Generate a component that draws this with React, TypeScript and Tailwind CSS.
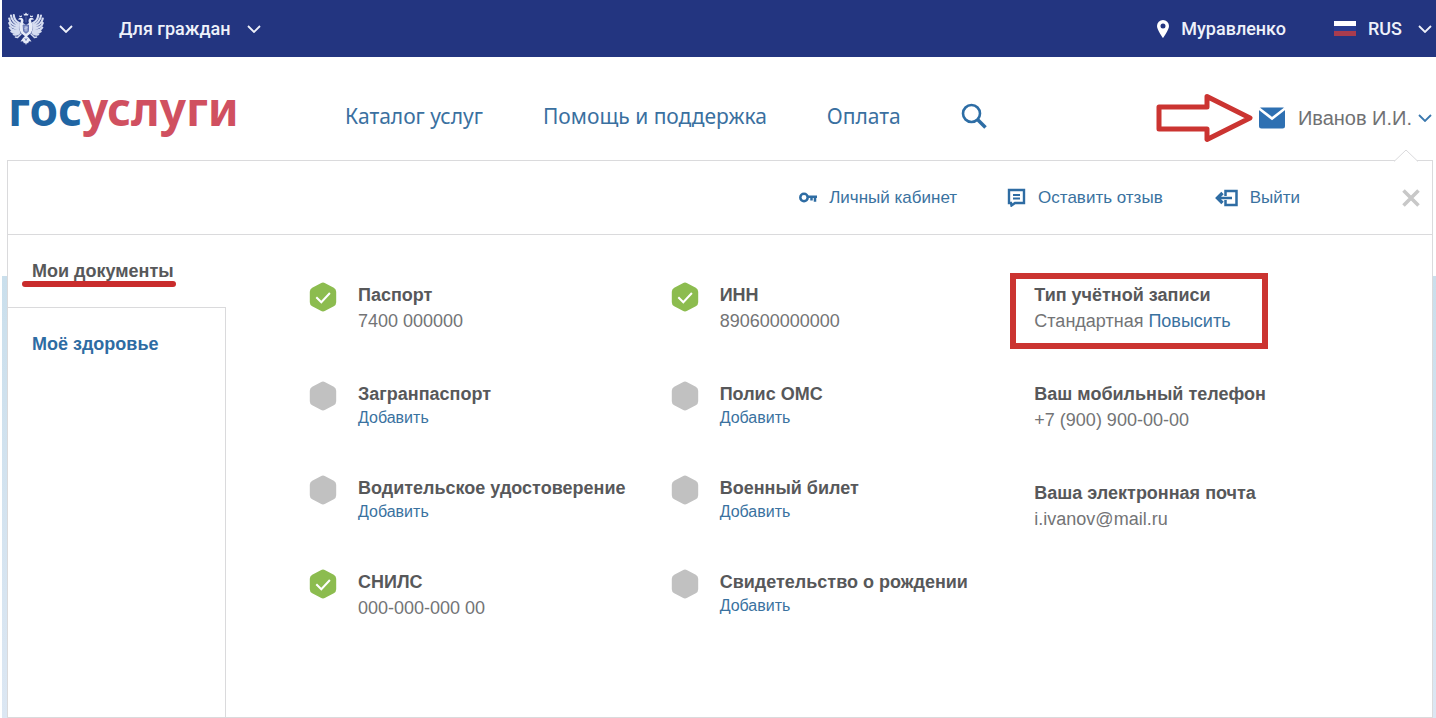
import React from 'react';

type Doc = { title: string; value?: string };

const passportDocs: Doc[] = [
  { title: 'Паспорт', value: '7400 000000' },
  { title: 'Загранпаспорт' },
  { title: 'Водительское удостоверение' },
  { title: 'СНИЛС', value: '000-000-000 00' },
];

const otherDocs: Doc[] = [
  { title: 'ИНН', value: '890600000000' },
  { title: 'Полис ОМС' },
  { title: 'Военный билет' },
  { title: 'Свидетельство о рождении' },
];

const Chevron = ({ className }: { className?: string }) => (
  <svg viewBox="0 0 14 8" className={`h-2 w-3.5 shrink-0 ${className ?? ''}`} fill="none" stroke="currentColor" strokeWidth="1.8">
    <path d="M1 1l6 6 6-6" />
  </svg>
);

const Eagle = () => (
  <svg viewBox="0 0 36 34" className="h-[34px] w-9 shrink-0" fill="none" stroke="#d5dcf0" strokeLinecap="round">
    {/* crowns */}
    <g fill="#e6ebf8" stroke="none">
      <path d="M16 3.500l-.5-2 1.300.7L18 .5l1.200 1.700 1.300-.7-.5 2z" />
      <path d="M11.500 5l-.3-1.600 1.500.6 1.300-.8-.2 1.800zM22 5l.3-1.800 1.300.8 1.500-.6-.3 1.600z" />
      <path d="M10 7.500c1-2 3.500-2.400 4.800-.8 1 1.300.7 2.800.2 4.300l3 2 3-2c-.5-1.500-.8-3 .2-4.300 1.300-1.600 3.800-1.200 4.800.8l-2.500.3c-.8.5-.3 2 .4 3.200 1.600 3 1.100 7.500-1.400 10.500L18 25l-4.500-3.500c-2.500-3-3-7.500-1.400-10.500.7-1.200 1.200-2.700.4-3.200z" />
      <path d="M18 23l3 3 2.500 3.500-2.500-.2-1 2.200-1-.8-1 2.300-1-2.300-1 .8-1-2.200-2.500.2L15 26z" />
    </g>
    {/* wings */}
    <g strokeWidth="2.100">
      <path d="M11 13C7 12 3.500 8 3 3.500M10.500 14.500C6 14 2 11 1.200 6.500M10.500 16C6 16.500 2 14.500 1.200 11M10.500 17.500C7 19 3.500 18.200 1.700 15.500M11 19c-2.500 2-5.500 2-7.700.3M11.500 20.500c-1.500 2-3.700 2.600-5.800 1.700M11 11C8 9.500 6 6.500 5.800 3" />
      <path d="M25 13c4-1 7.500-5 8-9.500M25.500 14.500c4.500-.5 8.500-3.500 9.300-8M25.500 16c4.500.5 8.500-1.500 9.300-5M25.500 17.500c3.500 1.500 7 .7 8.800-2M25 19c2.500 2 5.500 2 7.700.3M24.500 20.500c1.500 2 3.700 2.600 5.800 1.700M25 11c3-1.500 5-4.500 5.200-8" />
      <path d="M13 22l-3.500 3.500M9.500 25.500l-2-.5M23 22l3.500 3.500M26.500 25.500l2-.5" strokeWidth="1.600" />
    </g>
    {/* shield */}
    <path d="M15.500 13h5v5.500c0 1.200-1.200 2-2.500 2.700-1.300-.7-2.500-1.500-2.500-2.700z" fill="#8492c6" stroke="#4c5ea6" strokeWidth=".8" />
    <path d="M18 14.500v4M16.800 16.300l2.400-.6" strokeWidth=".8" />
    <path d="M18 5v5M17 26.500l1 2 1-2" stroke="#6474b3" strokeWidth=".8" />
  </svg>
);

const StatusBadge = ({ done }: { done: boolean }) => (
  <svg viewBox="0 0 28 30" className="h-[30px] w-7 shrink-0" role="img" aria-label={done ? 'Заполнено' : 'Не заполнено'}>
    <path
      d="M11.800 1.200a4.500 4.500 0 0 1 4.400 0l8.600 4.600a4.500 4.500 0 0 1 2.400 4v10.400a4.500 4.500 0 0 1-2.400 4l-8.600 4.600a4.500 4.500 0 0 1-4.400 0l-8.600-4.600a4.500 4.500 0 0 1-2.400-4V9.800a4.500 4.500 0 0 1 2.400-4z"
      fill={done ? '#8cbc4f' : '#c1c1c1'}
    />
    {done && <path d="M7.300 15.300l5 5 8.600-9.300" fill="none" stroke="#fff" strokeWidth="2" />}
  </svg>
);

const DocColumn = ({ docs }: { docs: Doc[] }) => (
  <ul className="flex flex-col gap-[47px]">
    {docs.map((doc) => (
      <li key={doc.title} className="flex items-start gap-[21px]">
        <StatusBadge done={Boolean(doc.value)} />
        <div className="whitespace-nowrap">
          <h3 className="text-lg leading-[26px] font-bold text-[#57585a]">{doc.title}</h3>
          {doc.value ? (
            <p className="text-lg leading-[26px] text-[#737476]">{doc.value}</p>
          ) : (
            <a href="#" className="block text-base leading-[21px] text-[#3a729f]">Добавить</a>
          )}
        </div>
      </li>
    ))}
  </ul>
);

const App = () => {
  return (
    <div className="flex min-h-screen flex-col bg-white pl-0.5 font-['Liberation_Sans',Arial,sans-serif]">
      {/* Top bar */}
      <div className="flex h-[57px] items-center justify-between bg-[#233580] pr-1 pl-1.5 font-[Roboto,sans-serif] text-lg font-medium text-[#eef1fa]">
        <div className="flex items-center">
          <button className="flex items-center gap-[15px]" aria-label="Государственные сайты">
            <Eagle />
            <Chevron />
          </button>
          <button className="ml-[46px] flex items-center gap-4">
            Для граждан
            <Chevron />
          </button>
        </div>
        <div className="flex items-center">
          <button className="flex items-center gap-3">
            <svg viewBox="0 0 12 18" className="h-[18px] w-3" fill="#fff">
              <path fillRule="evenodd" d="M6 0a6 6 0 0 1 6 6c0 4-6 12-6 12S0 10 0 6a6 6 0 0 1 6-6zm0 3.500a2.500 2.500 0 1 0 0 5 2.500 2.500 0 0 0 0-5z" />
            </svg>
            Муравленко
          </button>
          <button className="ml-12 flex items-center">
            <svg viewBox="0 0 22 15" className="mr-3 h-[15px] w-[22px]">
              <path d="M0 0h22v5H0z" fill="#fff" />
              <path d="M0 5h22v5H0z" fill="#283c90" />
              <path d="M0 10h22v5H0z" fill="#a83c4e" />
            </svg>
            RUS
            <Chevron className="ml-4" />
          </button>
        </div>
      </div>

      {/* Header */}
      <header className="flex h-[103px] items-center pr-1 pb-[5px] pl-1.5 text-[#3a70a0]">
        <a href="#" className="w-[337px] pt-1 font-['Noto_Sans',sans-serif] text-[46px] leading-none font-bold text-[#2065a3]">
          гос<span className="text-[#d05060]">услуги</span>
        </a>
        <nav className="flex flex-1 items-center gap-[60px] pt-5 font-['Noto_Sans',sans-serif] text-[21px] leading-7 whitespace-nowrap">
          <a href="#">Каталог услуг</a>
          <a href="#">Помощь и поддержка</a>
          <a href="#">Оплата</a>
          <button aria-label="Поиск">
            <svg viewBox="0 0 26 26" className="size-[26px]" fill="none" stroke="#2d6da5" strokeWidth="3">
              <circle cx="10.500" cy="10.500" r="8.500" strokeWidth="2.600" />
              <path d="M16.500 16.500l8 8" strokeWidth="3.600" />
            </svg>
          </button>
        </nav>
        <div className="flex items-center pt-6 text-[#707173]">
          <svg viewBox="0 0 98 50" className="mr-1 h-[50px] w-[98px]" fill="none" stroke="#cb3431" strokeWidth="5" strokeLinejoin="round">
            <path d="M3 14h48V3.500L94 25 51 46.500V36H3z" />
          </svg>
          <svg viewBox="0 0 28 22" className="mr-3 h-[22px] w-7">
            <path d="M1 1.500Q14 10 14 10T27 1.500V19a2.500 2.500 0 0 1-2.500 2.500h-21A2.500 2.500 0 0 1 1 19z" fill="#2e70b2" />
            <path d="M3 .5h22q1 0 1.500.8L14 11 1.500 1.300Q2 .5 3 .5z" fill="#2e70b2" />
            <path d="M1 1.500l13 10 13-10" fill="none" stroke="#fff" strokeWidth="2.600" />
          </svg>
          <button className="flex items-center gap-1.5 text-xl whitespace-nowrap">
            Иванов И.И.
            <Chevron className="text-[#3a78ae]" />
          </button>
        </div>
      </header>

      {/* Account panel */}
      <main className="flex flex-1 flex-col bg-[linear-gradient(to_bottom,#fff_116px,#cadfec_116px,#dce7f3)] pr-[3px] pl-[5px]">
        <section className="relative flex flex-1 flex-col border border-[#dadadc] bg-white text-[17px] leading-6 text-[#3a729f]">
          <svg viewBox="0 0 24 13" className="absolute -top-3 right-3.5 h-[13px] w-6" fill="#fff" stroke="#dadadc">
            <path d="M0 12.500L12 1l12 11.500" />
            <path d="M1 13h22" stroke="#fff" />
          </svg>
          <div className="flex h-[74px] items-center justify-end border-b border-[#dadadc] pr-3 whitespace-nowrap">
            <a href="#" className="flex items-center gap-3">
              <svg viewBox="0 0 18 12" className="h-3 w-[18px]" fill="none" stroke="#2e6ca3" strokeWidth="2.500">
                <circle cx="5" cy="5.500" r="3.700" />
                <path d="M8.500 4.800H18M16 5v4.800M12.500 5v3.500" />
              </svg>
              Личный кабинет
            </a>
            <a href="#" className="ml-[50px] flex items-center gap-3">
              <svg viewBox="0 0 19 19" className="size-[19px]" fill="none" stroke="#2e6ca3" strokeWidth="2.400">
                <path d="M2 2h15v13H8l-3.500 2.500L4 15H2z" />
                <path d="M6 7h7M6 10.500h7" strokeWidth="1.800" />
              </svg>
              Оставить отзыв
            </a>
            <a href="#" className="ml-[52px] flex items-center gap-3">
              <svg viewBox="0 0 23 18" className="h-[18px] w-[23px]" fill="none" stroke="#2e6ca3" strokeWidth="2.500">
                <path d="M10.500 7V2H21.500v14h-11v-5" />
                <path d="M17 9H3" />
                <path d="M7.500 4L2.500 9l5 5" strokeWidth="3.400" />
              </svg>
              Выйти
            </a>
            <button className="ml-[102px]" aria-label="Закрыть">
              <svg viewBox="0 0 18 18" className="size-[18px]" stroke="#c8c8c8" strokeWidth="3.600">
                <path d="M1.500 1.500l15 15M16.500 1.500l-15 15" />
              </svg>
            </button>
          </div>

          <div className="flex flex-1">
            <aside className="flex w-[218px] shrink-0 flex-col text-lg leading-6 font-bold">
              <a href="#" className="flex h-[72px] items-center pl-6 text-[#57585a]">
                <span className="relative">
                  Мои документы
                  <span className="absolute -right-0.5 -left-2.5 top-[22px] h-1.5 rounded-full bg-[#c92c2c]" />
                </span>
              </a>
              <div className="flex-1 border-t border-r border-[#dadadc]">
                <a href="#" className="flex h-[72px] items-center pl-6 text-[#2e6ca3]">Моё здоровье</a>
              </div>
            </aside>

            <div className="grid flex-1 grid-cols-3 pt-[47px] pr-[38px] pb-10 pl-[83px]">
              <DocColumn docs={passportDocs} />
              <DocColumn docs={otherDocs} />
              <dl className="flex flex-col gap-[47px] pl-0.5 text-lg leading-[26px] whitespace-nowrap text-[#737476]">
                <div className="relative">
                  <span className="absolute -top-[9px] -left-6 h-[76px] w-[258px] border-[6px] border-[#cb3431]" />
                  <dt className="font-bold text-[#57585a]">Тип учётной записи</dt>
                  <dd>
                    Стандартная <a href="#" className="relative text-[#3a729f]">Повысить</a>
                  </dd>
                </div>
                <div>
                  <dt className="font-bold text-[#57585a]">Ваш мобильный телефон</dt>
                  <dd>+7 (900) 900-00-00</dd>
                </div>
                <div>
                  <dt className="font-bold text-[#57585a]">Ваша электронная почта</dt>
                  <dd>i.ivanov@mail.ru</dd>
                </div>
              </dl>
            </div>
          </div>
        </section>
      </main>
    </div>
  );
};

export default App;
